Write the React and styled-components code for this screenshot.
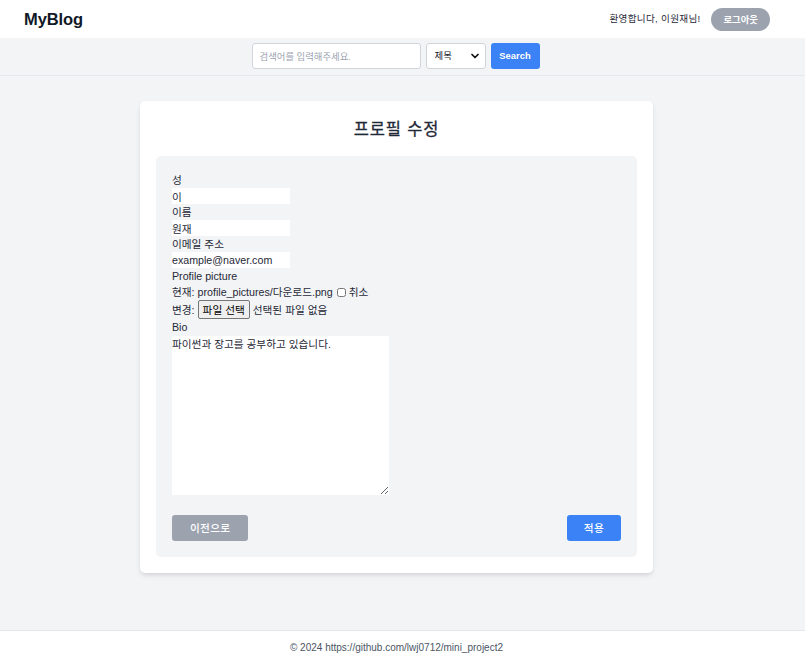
import React from "react";
import styled, { createGlobalStyle } from "styled-components";
import { ChevronDown } from "lucide-react";

const Global = createGlobalStyle`
  * { box-sizing: border-box; }
  html, body { margin: 0; padding: 0; }
  body {
    background: #f3f4f6;
    font-family: "Liberation Sans", "Noto Sans CJK KR", sans-serif;
    color: #1f2937;
    font-size: 10.67px;
    line-height: 1.5;
  }
  input, select, textarea, button {
    font-family: inherit;
    font-size: inherit;
    line-height: inherit;
    color: inherit;
    margin: 0;
  }
`;

const Page = styled.div`
  display: flex;
  flex-direction: column;
  min-height: 660px;
`;

const Header = styled.header`
  background: #ffffff;
  height: 38px;
  display: flex;
  align-items: center;
  justify-content: space-between;
  padding: 0 35px 0 24px;
`;

const Logo = styled.div`
  font-size: 16.5px;
  font-weight: 700;
  color: #111827;
  letter-spacing: -0.1px;
`;

const UserArea = styled.div`
  display: flex;
  align-items: center;
  gap: 11px;
`;

const Welcome = styled.span`
  font-size: 9.6px;
  letter-spacing: 0.3px;
  color: #1f2937;
`;

const PillButton = styled.button`
  border: 0;
  background: #9ca3af;
  color: #ffffff;
  font-size: 9.4px;
  font-weight: 700;
  height: 23px;
  padding: 0 12px;
  border-radius: 999px;
  line-height: 23px;
`;

const SearchBand = styled.div`
  background: #f3f4f6;
  border-bottom: 1px solid #e5e7eb;
  display: flex;
  justify-content: center;
  gap: 5px;
  padding: 5px 14px 6px 0;
`;

const SearchInput = styled.input`
  width: 169px;
  height: 26px;
  border: 1px solid #d1d5db;
  border-radius: 3px;
  background: #fff;
  padding: 0 7px;
  font-size: 9.4px;
  outline: none;
  &::placeholder { color: #9ca3af; }
`;

const SelectWrap = styled.div`
  position: relative;
  width: 60px;
  height: 26px;
`;

const Select = styled.select`
  appearance: none;
  width: 100%;
  height: 100%;
  border: 1px solid #d1d5db;
  border-radius: 3px;
  background: #fff;
  padding: 0 0 0 8px;
  font-size: 9.4px;
  color: #111827;
`;

const SelectArrow = styled.span`
  position: absolute;
  right: 5px;
  top: 7px;
  display: flex;
  pointer-events: none;
  color: #111;
`;

const PrimarySmall = styled.button`
  border: 0;
  background: #3b82f6;
  color: #fff;
  font-size: 9.4px;
  font-weight: 700;
  width: 49px;
  height: 26px;
  border-radius: 3px;
`;

const Main = styled.main`
  flex: 1;
  display: flex;
  justify-content: center;
  align-items: flex-start;
  padding: 25px 12px 57px 0;
`;

const Card = styled.section`
  width: 513px;
  background: #fff;
  border-radius: 5px;
  box-shadow: 0 3px 6px -1px rgba(0, 0, 0, 0.1), 0 2px 4px -2px rgba(0, 0, 0, 0.1);
  padding: 16px;
`;

const Title = styled.h2`
  margin: 0 0 16px;
  padding-top: 2px;
  text-align: center;
  font-size: 16.5px;
  line-height: 21px;
  font-weight: 400;
  -webkit-text-stroke: 0.3px #1f2937;
  letter-spacing: 0.8px;
  color: #1f2937;
`;

const Panel = styled.form`
  background: #f3f4f6;
  border-radius: 5px;
  padding: 16px;
  display: flex;
  flex-direction: column;
`;

const Label = styled.label`
  display: block;
  height: 16px;
`;

const TextInput = styled.input`
  display: block;
  width: 118px;
  height: 16px;
  border: 0;
  padding: 0;
  background: #fff;
  outline: none;
`;

const Line = styled.div`
  display: flex;
  align-items: center;
  white-space: nowrap;
  min-height: ${(p) => p.$h || 16}px;
`;

const Check = styled.input`
  width: 9px;
  height: 9px;
  margin: 0 3px 0 4px;
`;

const FileButton = styled.span`
  display: inline-flex;
  align-items: center;
  height: 19px;
  padding: 0 4px;
  margin: 0 3px 0 3px;
  border: 1px solid #767676;
  border-radius: 2px;
  background: #efefef;
  color: #000;
`;

const Bio = styled.textarea`
  display: block;
  width: 217px;
  height: 159px;
  border: 0;
  padding: 0;
  margin-top: 1px;
  background: #fff;
  outline: none;
  resize: both;
`;

const Actions = styled.div`
  display: flex;
  justify-content: space-between;
  margin-top: 20px;
`;

const ActionButton = styled.button`
  border: 0;
  border-radius: 3px;
  height: 26px;
  padding: 0 ${(p) => (p.$primary ? 17 : 18)}px;
  color: #fff;
  font-size: 10.67px;
  font-weight: 500;
  letter-spacing: 0.3px;
  background: ${(p) => (p.$primary ? "#3b82f6" : "#9ca3af")};
`;

const Footer = styled.footer`
  background: #fff;
  border-top: 1px solid #e5e7eb;
  text-align: center;
  padding: 10px 12px 12px 0;
  font-size: 10px;
  line-height: 13.5px;
  color: #4b5563;
`;

export default function App() {
  return (
    <>
      <Global />
      <Page>
        <Header>
          <Logo>MyBlog</Logo>
          <UserArea>
            <Welcome>환영합니다, 이원재님!</Welcome>
            <PillButton>로그아웃</PillButton>
          </UserArea>
        </Header>
        <SearchBand>
          <SearchInput placeholder="검색어를 입력해주세요." />
          <SelectWrap>
            <Select defaultValue="title">
              <option value="title">제목</option>
              <option value="content">내용</option>
            </Select>
            <SelectArrow>
              <ChevronDown size={12} strokeWidth={3.5} />
            </SelectArrow>
          </SelectWrap>
          <PrimarySmall>Search</PrimarySmall>
        </SearchBand>
        <Main>
          <Card>
            <Title>프로필 수정</Title>
            <Panel onSubmit={(e) => e.preventDefault()}>
              <Label>성</Label>
              <TextInput defaultValue="이" />
              <Label>이름</Label>
              <TextInput defaultValue="원재" />
              <Label>이메일 주소</Label>
              <TextInput defaultValue="example@naver.com" />
              <Label>Profile picture</Label>
              <Line>
                현재: profile_pictures/다운로드.png
                <Check type="checkbox" />
                취소
              </Line>
              <Line $h={18}>
                변경:
                <FileButton>파일 선택</FileButton>
                선택된 파일 없음
              </Line>
              <Label>Bio</Label>
              <Bio defaultValue="파이썬과 장고를 공부하고 있습니다." />
              <Actions>
                <ActionButton type="button">이전으로</ActionButton>
                <ActionButton type="submit" $primary>
                  적용
                </ActionButton>
              </Actions>
            </Panel>
          </Card>
        </Main>
        <Footer>© 2024 https://github.com/lwj0712/mini_project2</Footer>
      </Page>
    </>
  );
}
